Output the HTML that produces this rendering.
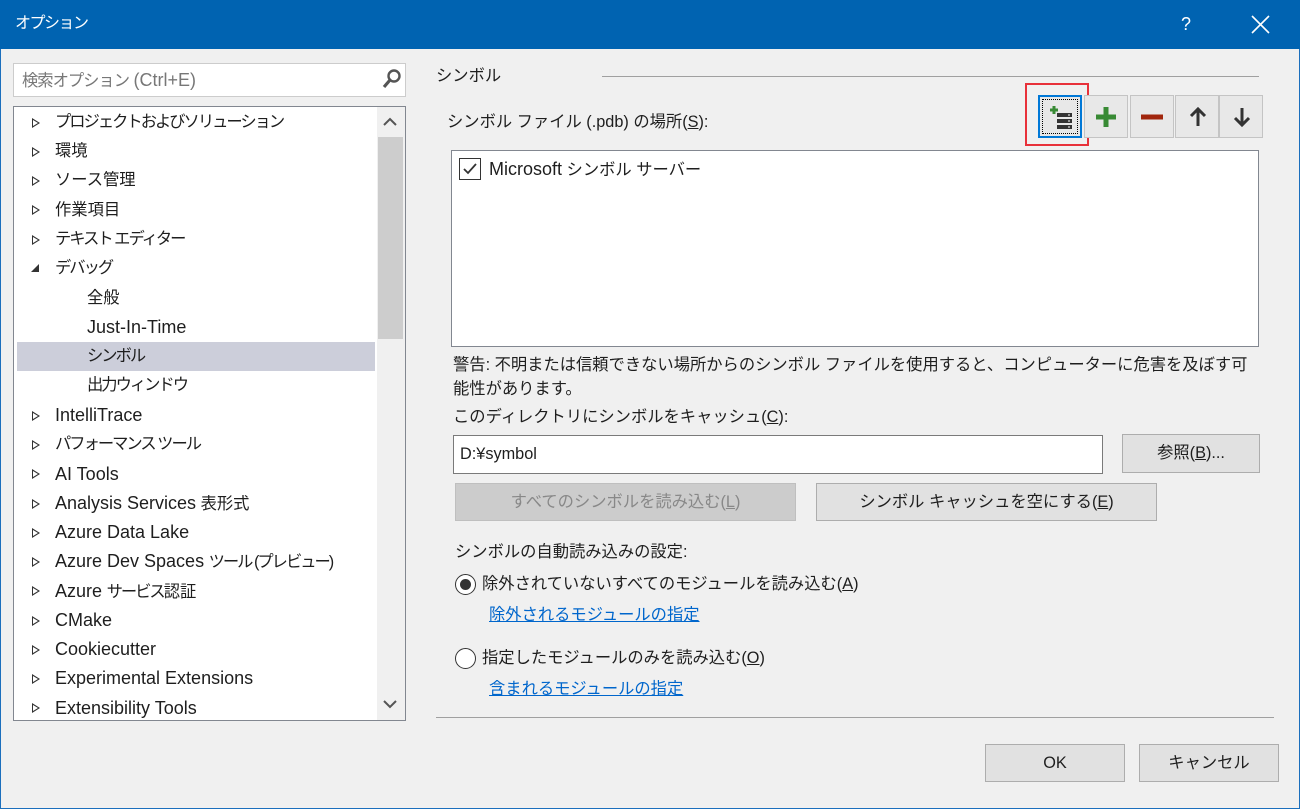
<!DOCTYPE html>
<html><head><meta charset="utf-8"><style>
*{margin:0;padding:0;box-sizing:border-box}
body{width:1300px;height:809px;background:#f0f0f0;font-family:"Liberation Sans","Noto Sans CJK JP",sans-serif;font-size:16.3px;color:#1e1e1e;position:relative;overflow:hidden}
.a{position:absolute;white-space:nowrap;line-height:24px}
.l{font-size:18px}
.k{letter-spacing:-2px}
.title{position:absolute;left:0;top:0;width:1300px;height:49px;background:#0063b1;color:#fff}
.frame{position:absolute;left:0;top:49px;width:1300px;height:760px;border:1px solid #1b6fbd;border-top:none}
.btn{position:absolute;background:#e1e1e1;border:1px solid #adadad;text-align:center;line-height:36px}
.tb{position:absolute;top:95px;width:44px;height:43px;background:#e8e8e8;border:1px solid #c4c4c4}
.u{text-decoration:underline}
.link{color:#0066cc;text-decoration:underline}
.tri{position:absolute;left:32px;width:0;height:0;border-left:8px solid #333;border-top:5px solid transparent;border-bottom:5px solid transparent}
.tri:after{content:"";position:absolute;left:-7px;top:-3px;border-left:5px solid #fff;border-top:3px solid transparent;border-bottom:3px solid transparent}
</style></head><body>
<div class="title">
<div class="a" style="left:15px;top:12px;font-size:16px;letter-spacing:-1.5px">オプション</div>
<div class="a" style="left:1181px;top:12px;font-size:18px">?</div>
<svg style="position:absolute;left:1251px;top:15px" width="19" height="19"><path d="M1 1L18 18M18 1L1 18" stroke="#fff" stroke-width="1.6"/></svg>
</div>
<div class="frame"></div>
<div style="position:absolute;left:13px;top:63px;width:393px;height:34px;background:#fff;border:1px solid #ccc"></div>
<div class="a" style="left:22px;top:68px;color:#777"><span class="k" style="letter-spacing:-1px">検索オプション</span> <span class="l">(Ctrl+E)</span></div>
<svg style="position:absolute;left:381px;top:68px" width="22" height="22"><circle cx="13" cy="8" r="5.5" fill="none" stroke="#555" stroke-width="2.4"/><path d="M9 12L3 19" stroke="#555" stroke-width="3.2"/></svg>
<div style="position:absolute;left:13px;top:106px;width:393px;height:615px;background:#fff;border:1px solid #828790"></div>
<div style="position:absolute;left:377px;top:107px;width:28px;height:613px;background:#f0f0f0"></div>
<div style="position:absolute;left:378px;top:137px;width:25px;height:202px;background:#cdcdcd"></div>
<svg style="position:absolute;left:383px;top:117px" width="14" height="10"><path d="M1 8L7 2L13 8" fill="none" stroke="#555" stroke-width="2"/></svg>
<svg style="position:absolute;left:383px;top:699px" width="14" height="10"><path d="M1 2L7 8L13 2" fill="none" stroke="#555" stroke-width="2"/></svg>
<div style="position:absolute;left:17px;top:342px;width:358px;height:29px;background:#ccceda"></div>
<div class="tri" style="top:118px"></div><div class="a k" style="left:55px;top:110px">プロジェクトおよびソリューション</div>
<div class="tri" style="top:147px"></div><div class="a" style="left:55px;top:139px">環境</div>
<div class="tri" style="top:176px"></div><div class="a" style="left:55px;top:168px">ソース管理</div>
<div class="tri" style="top:205px"></div><div class="a" style="left:55px;top:198px">作業項目</div>
<div class="tri" style="top:235px"></div><div class="a k" style="left:55px;top:227px">テキスト エディター</div>
<svg style="position:absolute;left:30px;top:263px" width="10" height="10"><path d="M9 1L9 9L1 9Z" fill="#333"/></svg><div class="a k" style="left:55px;top:256px">デバッグ</div>
<div class="a" style="left:87px;top:286px">全般</div>
<div class="a l" style="left:87px;top:315px">Just-In-Time</div>
<div class="a k" style="left:87px;top:344px">シンボル</div>
<div class="a k" style="left:87px;top:373px">出力ウィンドウ</div>
<div class="tri" style="top:411px"></div><div class="a l" style="left:55px;top:403px">IntelliTrace</div>
<div class="tri" style="top:440px"></div><div class="a k" style="left:55px;top:432px">パフォーマンス ツール</div>
<div class="tri" style="top:469px"></div><div class="a l" style="left:55px;top:462px">AI Tools</div>
<div class="tri" style="top:499px"></div><div class="a" style="left:55px;top:491px"><span class="l">Analysis Services</span> 表形式</div>
<div class="tri" style="top:528px"></div><div class="a l" style="left:55px;top:520px">Azure Data Lake</div>
<div class="tri" style="top:557px"></div><div class="a" style="left:55px;top:549px"><span class="l">Azure Dev Spaces</span> <span class="k">ツール (プレビュー)</span></div>
<div class="tri" style="top:586px"></div><div class="a" style="left:55px;top:579px"><span class="l">Azure</span> <span class="k">サービス</span>認証</div>
<div class="tri" style="top:616px"></div><div class="a l" style="left:55px;top:608px">CMake</div>
<div class="tri" style="top:645px"></div><div class="a l" style="left:55px;top:637px">Cookiecutter</div>
<div class="tri" style="top:674px"></div><div class="a l" style="left:55px;top:666px">Experimental Extensions</div>
<div class="tri" style="top:703px"></div><div class="a l" style="left:55px;top:696px">Extensibility Tools</div>
<div class="a" style="left:436px;top:64px">シンボル</div>
<div style="position:absolute;left:602px;top:76px;width:657px;height:1px;background:#a0a0a0"></div>
<div class="a" style="left:447px;top:110px">シンボル ファイル (.pdb) の場所(<span class="u">S</span>):</div>
<div style="position:absolute;left:1025px;top:83px;width:64px;height:63px;border:2px solid #e8313a"></div>
<div class="tb" style="left:1038px;background:#e8e8e8;border:2px solid #0078d7"><div style="position:absolute;inset:2px;border:1px dotted #000"></div>
<svg style="position:absolute;left:8px;top:8px" width="26" height="26"><path d="M2 5H10M6 1V9" stroke="#388a34" stroke-width="3"/><rect x="9" y="8" width="15" height="4" fill="#333"/><rect x="9" y="14" width="15" height="4" fill="#333"/><rect x="9" y="20" width="15" height="4" fill="#333"/><path d="M20 10H22M20 16H22M20 22H22" stroke="#fff" stroke-width="1"/></svg></div>
<div class="tb" style="left:1084px"><svg style="position:absolute;left:9px;top:9px" width="24" height="24"><path d="M12 2V22M2 12H22" stroke="#388a34" stroke-width="5"/></svg></div>
<div class="tb" style="left:1130px"><svg style="position:absolute;left:8px;top:9px" width="26" height="24"><path d="M2 12H24" stroke="#a1260d" stroke-width="5"/></svg></div>
<div class="tb" style="left:1175px"><svg style="position:absolute;left:12px;top:10px" width="20" height="22"><path d="M10 20V4M3 10L10 3L17 10" fill="none" stroke="#333" stroke-width="3"/></svg></div>
<div class="tb" style="left:1219px"><svg style="position:absolute;left:12px;top:10px" width="20" height="22"><path d="M10 2V18M3 12L10 19L17 12" fill="none" stroke="#333" stroke-width="3"/></svg></div>
<div style="position:absolute;left:451px;top:150px;width:808px;height:197px;background:#fff;border:1px solid #828790"></div>
<div style="position:absolute;left:459px;top:158px;width:22px;height:22px;border:1px solid #333;background:#fff"></div>
<svg style="position:absolute;left:461px;top:160px" width="18" height="18"><path d="M3 9L7 13L15 4" fill="none" stroke="#333" stroke-width="1.8"/></svg>
<div class="a" style="left:489px;top:157px"><span class="l">Microsoft</span> シンボル サーバー</div>
<div class="a" style="left:453px;top:353px">警告: 不明または信頼できない場所からのシンボル ファイルを使用すると、コンピューターに危害を及ぼす可</div>
<div class="a" style="left:453px;top:377px">能性があります。</div>
<div class="a" style="left:453px;top:405px">このディレクトリにシンボルをキャッシュ(<span class="u">C</span>):</div>
<div style="position:absolute;left:453px;top:435px;width:650px;height:39px;background:#fff;border:1px solid #7a7a7a"></div>
<div class="a" style="left:460px;top:442px">D:¥symbol</div>
<div class="btn" style="left:1122px;top:434px;width:138px;height:39px">参照(<span class="u">B</span>)...</div>
<div class="btn" style="left:455px;top:483px;width:341px;height:38px;background:#ccc;border-color:#bfbfbf;color:#888">すべてのシンボルを読み込む(<span class="u">L</span>)</div>
<div class="btn" style="left:816px;top:483px;width:341px;height:38px">シンボル キャッシュを空にする(<span class="u">E</span>)</div>
<div class="a" style="left:455px;top:540px">シンボルの自動読み込みの設定:</div>
<div style="position:absolute;left:455px;top:574px;width:21px;height:21px;border:1.5px solid #333;border-radius:50%;background:#fff"></div>
<div style="position:absolute;left:460px;top:579px;width:11px;height:11px;border-radius:50%;background:#333"></div>
<div class="a" style="left:482px;top:572px">除外されていないすべてのモジュールを読み込む(<span class="u">A</span>)</div>
<div class="a link" style="left:489px;top:603px">除外されるモジュールの指定</div>
<div style="position:absolute;left:455px;top:648px;width:21px;height:21px;border:1.5px solid #333;border-radius:50%;background:#fff"></div>
<div class="a" style="left:482px;top:646px">指定したモジュールのみを読み込む(<span class="u">O</span>)</div>
<div class="a link" style="left:489px;top:677px">含まれるモジュールの指定</div>
<div style="position:absolute;left:436px;top:717px;width:838px;height:1px;background:#a0a0a0"></div>
<div class="btn" style="left:985px;top:744px;width:140px;height:38px">OK</div>
<div class="btn" style="left:1139px;top:744px;width:140px;height:38px">キャンセル</div>
</body></html>
